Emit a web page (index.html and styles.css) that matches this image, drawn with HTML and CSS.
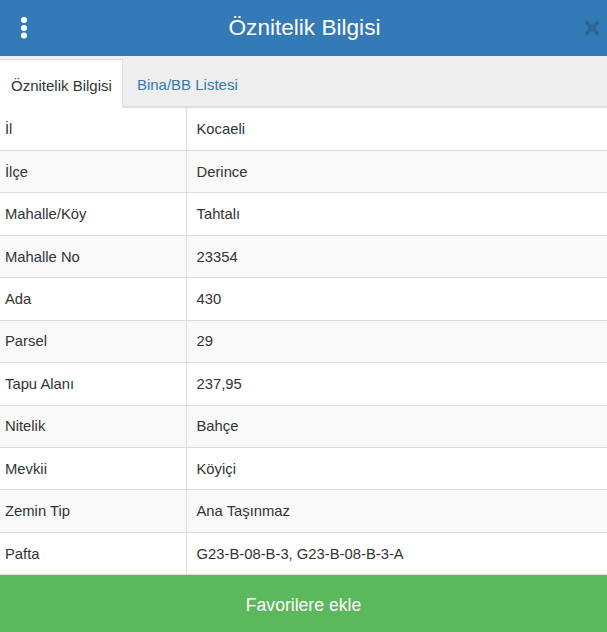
FILE: index.html
```html
<!DOCTYPE html>
<html lang="tr">
<head>
<meta charset="utf-8">
<title>Öznitelik Bilgisi</title>
<link rel="stylesheet" href="styles.css">
</head>
<body>
<div class="panel">
  <header class="header">
    <button class="menu" aria-label="Menü">
      <svg width="8" height="24" viewBox="0 0 8 24"><circle cx="4" cy="4" r="3" fill="#fff"/><circle cx="4" cy="12" r="3" fill="#fff"/><circle cx="4" cy="19.5" r="3" fill="#fff"/></svg>
    </button>
    <h1 class="title">Öznitelik Bilgisi</h1>
    <button class="close" aria-label="Kapat">
      <svg width="16" height="16" viewBox="0 0 16 16"><path d="M3 3 L13 13 M13 3 L3 13" stroke="#2a6496" stroke-width="4" stroke-linecap="round"/></svg>
    </button>
  </header>
  <nav class="tabs">
    <span class="tab active">Öznitelik Bilgisi</span>
    <span class="tab">Bina/BB Listesi</span>
  </nav>
  <table class="attrs">
    <tbody>
      <tr><td class="k">İl</td><td class="v">Kocaeli</td></tr>
      <tr><td class="k">İlçe</td><td class="v">Derince</td></tr>
      <tr><td class="k">Mahalle/Köy</td><td class="v">Tahtalı</td></tr>
      <tr><td class="k">Mahalle No</td><td class="v">23354</td></tr>
      <tr><td class="k">Ada</td><td class="v">430</td></tr>
      <tr><td class="k">Parsel</td><td class="v">29</td></tr>
      <tr><td class="k">Tapu Alanı</td><td class="v">237,95</td></tr>
      <tr><td class="k">Nitelik</td><td class="v">Bahçe</td></tr>
      <tr><td class="k">Mevkii</td><td class="v">Köyiçi</td></tr>
      <tr><td class="k">Zemin Tip</td><td class="v">Ana Taşınmaz</td></tr>
      <tr><td class="k">Pafta</td><td class="v">G23-B-08-B-3, G23-B-08-B-3-A</td></tr>
    </tbody>
  </table>
  <button class="fav">Favorilere ekle</button>
</div>
</body>
</html>
```
FILE: styles.css
```css
* { box-sizing: border-box; }
html, body {
  margin: 0;
  padding: 0;
  background: #fff;
  font-family: "Liberation Sans", Arial, sans-serif;
  color: #333;
}
.panel {
  width: 607px;
  height: 632px;
  display: flex;
  flex-direction: column;
  overflow: hidden;
}
.header {
  height: 56px;
  background: #337ab7;
  display: grid;
  grid-template-columns: 1fr auto 1fr;
  align-items: center;
  padding: 0 7px;
  flex: none;
}
.menu, .close {
  background: none;
  border: 0;
  padding: 0;
  display: flex;
  cursor: pointer;
}
.menu { margin-left: 13px; justify-self: start; }
.close { justify-self: end; opacity: 0.9; }
.title {
  margin: 0 0 0 2px;
  font-size: 22.6px;
  font-weight: normal;
  color: #fff;
  white-space: nowrap;
}
.tabs {
  height: 52px;
  background: #eeeeee;
  border-bottom: 2px solid #dddddd;
  display: flex;
  align-items: flex-end;
  padding-top: 3px;
  flex: none;
}
.tab {
  font-size: 15px;
  color: #337ab7;
  padding: 4px 14px 0 14px;
  height: 47px;
  display: flex;
  align-items: center;
  white-space: nowrap;
}
.tab.active {
  color: #333;
  background: #fff;
  border-top: 1px solid #dddddd;
  border-right: 1px solid #dddddd;
  padding: 3px 10px 0 11px;
  height: 49px;
  margin-bottom: -2px;
}
.attrs {
  width: 100%;
  border-collapse: collapse;
  font-size: 14.8px;
  flex: none;
}
.attrs tr:nth-child(even) td { background: #f9f9f9; }
.attrs td {
  height: 42.45px;
  border-bottom: 1px solid #dddddd;
  padding: 0;
  line-height: 20px;
  vertical-align: middle;
}
.attrs td.k {
  width: 186px;
  padding-left: 5px;
  border-right: 1px solid #dddddd;
}
.attrs td.v {
  padding-left: 10px;
}
.fav {
  flex: 1;
  width: 100%;
  border: 0;
  margin: 0;
  padding: 3px 0 0 0;
  background: #5cb85c;
  color: #fff;
  font-family: "Liberation Sans", Arial, sans-serif;
  font-size: 17.6px;
  cursor: pointer;
}
```
